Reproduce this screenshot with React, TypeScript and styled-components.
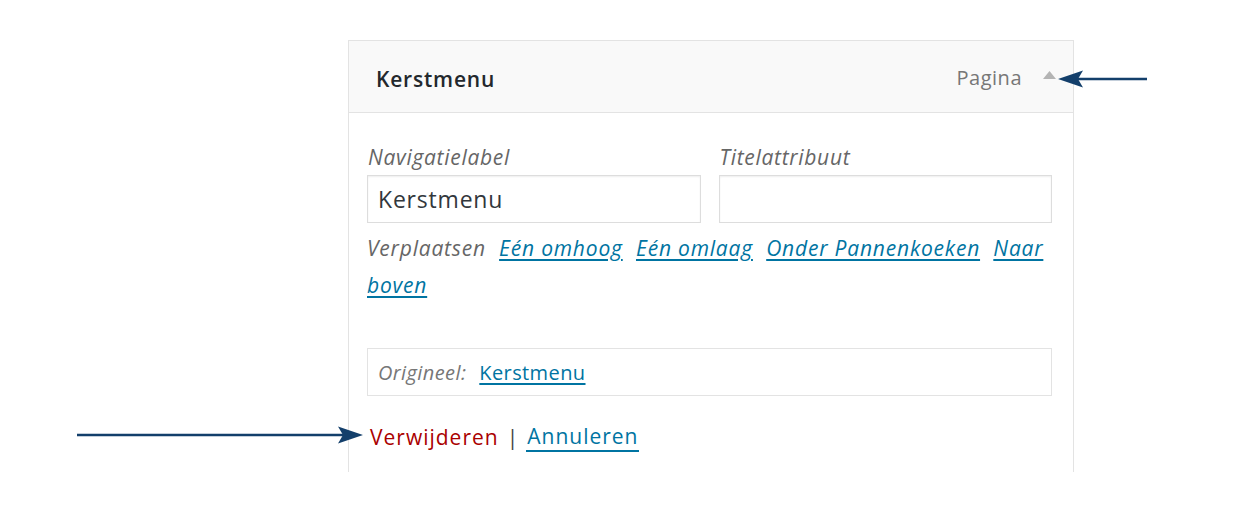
import styled, { createGlobalStyle } from "styled-components";

const GlobalStyle = createGlobalStyle`
	html, body {
		margin: 0;
		padding: 0;
		background: #fff;
	}
	body {
		font-family: "Open Sans", "Noto Sans", sans-serif;
		color: #444;
	}
`;

function LeftArrow() {
	return (
		<ArrowRight width="92" height="20" viewBox="0 0 92 20">
			<line x1="18" y1="10" x2="89" y2="10" stroke="#133f6b" strokeWidth="2.4" />
			<polygon points="0,10 25,1.5 20,10 25,18.5" fill="#133f6b" />
		</ArrowRight>
	);
}

function RightArrow() {
	return (
		<ArrowLeft width="286" height="20" viewBox="0 0 286 20">
			<line x1="0" y1="10" x2="268" y2="10" stroke="#133f6b" strokeWidth="2.4" />
			<polygon points="286,10 261,1.5 266,10 261,18.5" fill="#133f6b" />
		</ArrowLeft>
	);
}

export default function App() {
	return (
		<Page>
			<GlobalStyle />
			<Panel>
				<Header>
					<Title>Kerstmenu</Title>
					<Controls>
						<ItemType>Pagina</ItemType>
						<Toggle width="13" height="8" viewBox="0 0 13 8">
							<polygon points="6.5,0 13,8 0,8" fill="#b4b4b4" />
						</Toggle>
					</Controls>
				</Header>
				<Body>
					<Fields>
						<Field>
							<Label>Navigatielabel</Label>
							<Input defaultValue="Kerstmenu" />
						</Field>
						<Field>
							<Label>Titelattribuut</Label>
							<Input defaultValue="" />
						</Field>
					</Fields>
					<MoveRow>
						Verplaatsen <MoveLink href="#">Eén omhoog</MoveLink>{" "}
						<MoveLink href="#">Eén omlaag</MoveLink>{" "}
						<MoveLink href="#">Onder Pannenkoeken</MoveLink>{" "}
						<MoveLink href="#">Naar boven</MoveLink>
					</MoveRow>
					<Original>
						<OriginalLabel>Origineel:</OriginalLabel>
						<OriginalLink href="#">Kerstmenu</OriginalLink>
					</Original>
					<Actions>
						<DeleteLink href="#">Verwijderen</DeleteLink>
						<Separator>|</Separator>
						<CancelLink href="#">Annuleren</CancelLink>
					</Actions>
				</Body>
			</Panel>
			<LeftArrow />
			<RightArrow />
		</Page>
	);
}

const Page = styled.div`
	position: relative;
	width: 1250px;
	height: 513px;
	padding: 40px 0 0 348px;
	box-sizing: border-box;
	overflow: hidden;
`;

const Panel = styled.div`
	width: 726px;
	box-sizing: border-box;
	border: 1px solid #e3e3e3;
	border-bottom: none;
	background: #fff;
`;

const Header = styled.div`
	display: flex;
	justify-content: space-between;
	align-items: center;
	height: 71px;
	padding: 0 17px 0 27px;
	background: #f9f9f9;
	border-bottom: 1px solid #e3e3e3;
`;

const Title = styled.span`
	font-size: 21px;
	font-weight: 600;
	letter-spacing: 0.8px;
	color: #23282d;
	margin-top: 4px;
`;

const Controls = styled.div`
	display: flex;
	align-items: center;
	gap: 21px;
`;

const ItemType = styled.span`
	font-size: 20px;
	letter-spacing: 0.5px;
	color: #777;
	margin-top: 2px;
`;

const Toggle = styled.svg`
	display: block;
	margin-top: -4px;
`;

const Body = styled.div`
	padding: 30px 21px 20px 18px;
`;

const Fields = styled.div`
	display: flex;
	gap: 18px;
`;

const Field = styled.label`
	display: flex;
	flex-direction: column;
	flex: 1;
`;

const Label = styled.span`
	font-size: 21px;
	font-style: italic;
	letter-spacing: 0.7px;
	color: #666;
	line-height: 28px;
	margin-bottom: 4px;
	padding-left: 1px;
`;

const Input = styled.input`
	height: 48px;
	box-sizing: border-box;
	border: 1px solid #ddd;
	box-shadow: inset 0 1px 2px rgba(0, 0, 0, 0.07);
	padding: 0 10px;
	font-family: "Open Sans", sans-serif;
	font-size: 23px;
	letter-spacing: 0.8px;
	color: #32373c;
	outline: none;
`;

const MoveRow = styled.div`
	margin-top: 7px;
	font-size: 21px;
	font-style: italic;
	letter-spacing: 0.8px;
	color: #666;
	line-height: 37px;
	word-spacing: 7px;
`;

const MoveLink = styled.a`
	color: #0074a2;
	text-decoration: underline;
	text-underline-offset: 3px;
	word-spacing: 0;
`;

const Original = styled.div`
	display: flex;
	align-items: center;
	gap: 13px;
	margin-top: 44px;
	height: 48px;
	box-sizing: border-box;
	padding: 0 10px;
	border: 1px solid #e3e3e3;
	font-size: 20px;
	letter-spacing: 0.4px;
`;

const OriginalLabel = styled.span`
	font-style: italic;
	color: #777;
`;

const OriginalLink = styled.a`
	color: #0074a2;
	text-decoration: underline;
	text-underline-offset: 3px;
`;

const Actions = styled.div`
	display: flex;
	align-items: center;
	gap: 8px;
	margin-top: 26px;
	padding-left: 3px;
	font-size: 21px;
	letter-spacing: 1px;
`;

const DeleteLink = styled.a`
	color: #a00;
	text-decoration: none;
`;

const Separator = styled.span`
	color: #444;
	letter-spacing: 0;
`;

const CancelLink = styled.a`
	color: #0074a2;
	text-decoration: none;
	border-bottom: 2px solid #0074a2;
	line-height: 28px;
	padding: 0 1px;
`;

const ArrowRight = styled.svg`
	position: absolute;
	left: 1058px;
	top: 69px;
`;

const ArrowLeft = styled.svg`
	position: absolute;
	left: 77px;
	top: 425px;
`;
